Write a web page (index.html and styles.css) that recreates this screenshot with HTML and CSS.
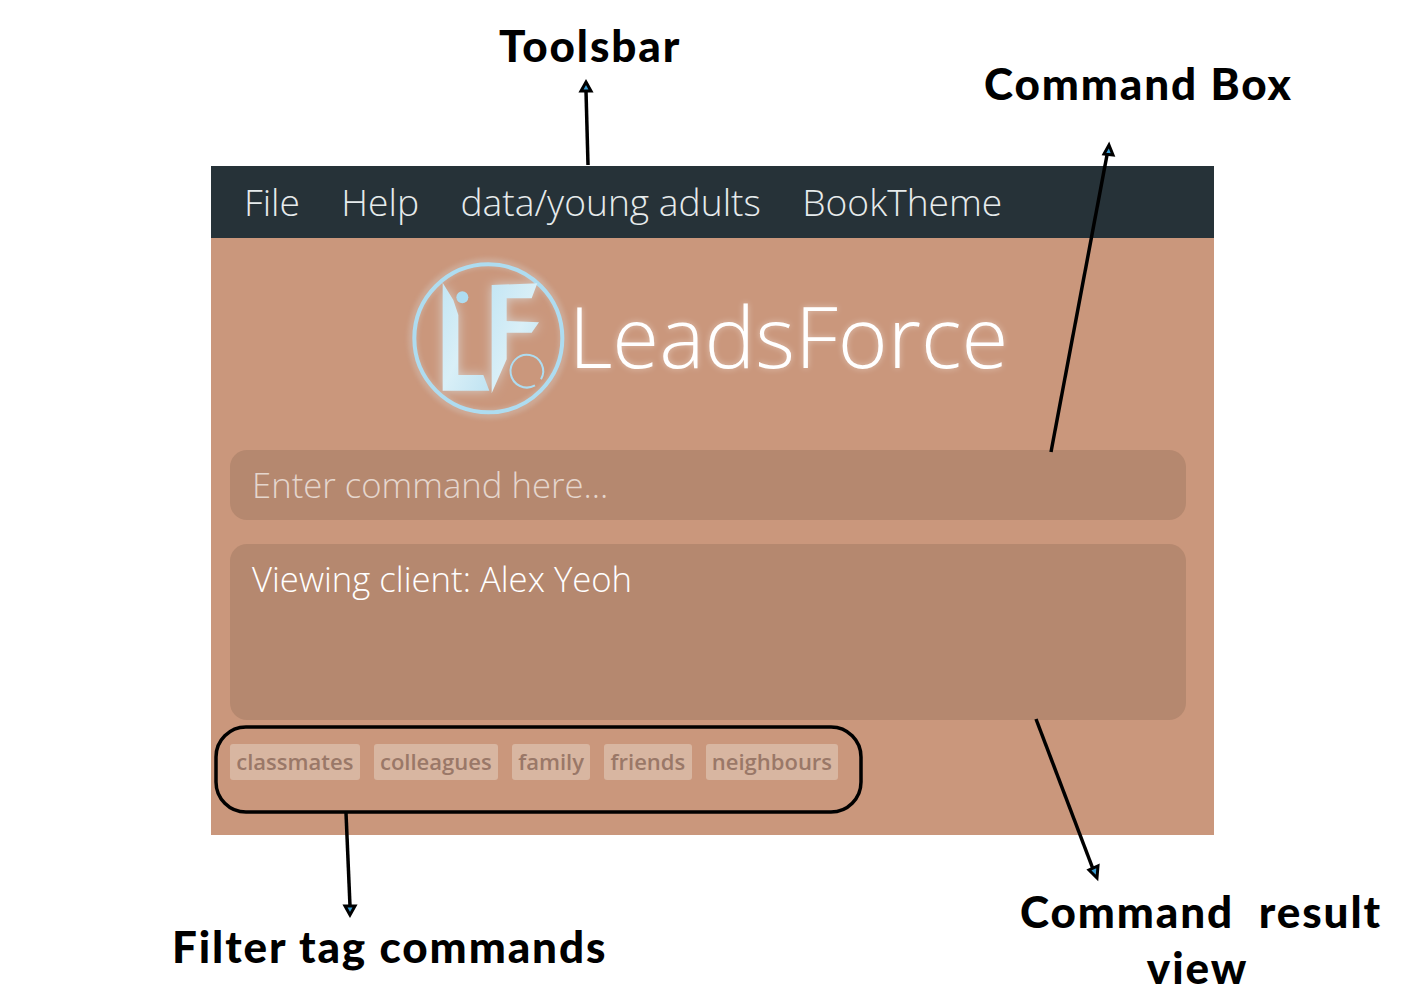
FILE: index.html
```html
<!DOCTYPE html>
<html lang="en">
<head>
    <meta charset="UTF-8">
    <meta name="viewport" content="width=device-width, initial-scale=1.0">
    <title>LeadsForce UI overview</title>
    <link rel="stylesheet" href="styles.css">
</head>
<body>

<div class="stage">
    <div class="app">
        <nav class="menuBar">
            <span class="menuItem">File</span>
            <span class="menuItem">Help</span>
            <span class="menuItem">data/young adults</span>
            <span class="menuItem">BookTheme</span>
        </nav>

        <div class="content">
            <div class="brand">
                <svg class="logo" viewBox="0 0 600 540" aria-hidden="true">
                    <defs>
                        <filter id="softGlow" x="-30%" y="-30%" width="160%" height="160%">
                            <feGaussianBlur stdDeviation="16"/>
                        </filter>
                        <linearGradient id="logoShade" x1="0" y1="0" x2="1" y2="1">
                            <stop offset="0" stop-color="#c4e6f4"/>
                            <stop offset="0.5" stop-color="#d9eff7"/>
                            <stop offset="1" stop-color="#bfe3f2"/>
                        </linearGradient>
                    </defs>
                    <circle class="logoHalo" cx="265" cy="265" r="226"/>
                    <g class="logoHalo2" filter="url(#softGlow)">
                        <polygon points="128,98 160,150 175,195 175,375 250,375 268,422 128,422"/>
                        <polygon points="275,105 412,100 395,145 320,145 320,213 417,217 395,248 320,248 320,328 275,430"/>
                    </g>
                    <circle class="logoRing" cx="265" cy="265" r="222"/>
                    <polygon class="logoFill" points="128,98 160,150 175,195 175,375 250,375 268,422 128,422"/>
                    <polygon class="logoFill" points="275,105 412,100 395,145 320,145 320,213 417,217 395,248 320,248 320,328 275,430"/>
                    <circle class="logoDot" cx="187" cy="142" r="18"/>
                    <path class="logoLoop" d="M405 406 A49 49 0 1 1 423 388"/>
                </svg>
                <span class="brandName">LeadsForce</span>
            </div>

            <div class="commandBox">Enter command here...</div>
            <div class="resultBox">Viewing client: Alex Yeoh</div>

            <div class="tagRow">
                <span class="tag">classmates</span>
                <span class="tag">colleagues</span>
                <span class="tag">family</span>
                <span class="tag">friends</span>
                <span class="tag">neighbours</span>
            </div>
        </div>
    </div>

    <!-- callouts drawn over the screenshot -->
    <svg class="arrows" viewBox="0 0 1425 1000" aria-hidden="true">
        <rect class="outline" x="216" y="727" width="645" height="85" rx="30"/>
        <line class="arrowLine" x1="588" y1="165" x2="586" y2="91"/>
        <polygon class="arrowHead" points="586,82 591,91 581,91"/>
        <line class="arrowLine" x1="1051" y1="452" x2="1107" y2="155"/>
        <polygon class="arrowHead" points="1109,145 1113,155 1104,154"/>
        <line class="arrowLine" x1="1036" y1="719" x2="1093" y2="869"/>
        <polygon class="arrowHead" points="1097,878 1089,870 1098,866"/>
        <line class="arrowLine" x1="346" y1="813" x2="350" y2="906"/>
        <polygon class="arrowHead" points="350,915 345,906 355,906"/>
    </svg>

    <div class="callout calloutTools">Toolsbar</div>
    <div class="callout calloutCommand">Command Box</div>
    <div class="callout calloutResult">Command&nbsp; result<br><span class="resultTail">view</span></div>
    <div class="callout calloutFilter">Filter tag commands</div>
</div>

</body>
</html>
```

FILE: styles.css
```css
html, body {
    margin: 0;
    background-color: white;
}
.stage {
    position: relative;
    height: 1000px;
    overflow: hidden;
    padding: 166px 0 0 211px;
    box-sizing: border-box;
    font-family: "Open Sans", "Noto Sans", sans-serif;
}
.app {
    width: 1003px;
    height: 669px;
    display: flex;
    flex-direction: column;
    background-color: #ca977c;
}
.menuBar {
    height: 70px;
    display: flex;
    align-items: center;
    gap: 41.4px;
    padding: 0 0 2px 33px;
    background-color: #263238;
    color: #e6ebec;
    font-size: 37.2px;
    font-weight: 300;
}
.content {
    flex: 1;
    display: flex;
    flex-direction: column;
    padding: 0 28px 0 19px;
}
.brand {
    height: 212px;
    display: flex;
    align-items: center;
    justify-content: center;
    margin-right: 6px;
}
.logo {
    width: 200px;
    height: 180px;
    margin: 0 -37px 0 0;
    position: relative;
    top: -4px;
    left: -4px;
    overflow: visible;
}
.logoHalo {
    fill: none;
    stroke: rgba(225, 245, 255, 0.2);
    stroke-width: 30;
    filter: blur(7px);
}
.logoHalo2 {
    fill: rgba(225, 245, 255, 0.6);
}
.logoRing {
    fill: none;
    stroke: #aedcf0;
    stroke-width: 12;
}
.logoFill {
    fill: url(#logoShade);
}
.logoDot {
    fill: #aedcf0;
}
.logoLoop {
    fill: none;
    stroke: #aedcf0;
    stroke-width: 6;
}
.brandName {
    color: white;
    font-size: 85.3px;
    font-weight: 300;
    line-height: 1;
    position: relative;
    top: -8px;
    left: 2px;
    text-shadow: 0 0 6px rgba(255, 255, 255, 0.45);
}
.commandBox, .resultBox {
    border-radius: 17px;
    background-color: #b5886f;
    box-sizing: border-box;
    font-weight: 300;
    font-size: 34.7px;
}
.commandBox {
    height: 70px;
    display: flex;
    align-items: center;
    padding: 0 0 1px 22px;
    color: #e5d6cd;
}
.resultBox {
    height: 176px;
    margin-top: 24px;
    padding: 12px 22px;
    color: white;
    line-height: 46px;
}
.tagRow {
    display: flex;
    gap: 14px;
    margin-top: 24px;
}
.tag {
    height: 34px;
    display: flex;
    align-items: center;
    padding: 0 6.3px 2px;
    border-radius: 3px;
    background-color: #d8b6a1;
    color: #9a7868;
    font-size: 22px;
    font-weight: 600;
}
.arrows {
    position: absolute;
    top: 0;
    left: 0;
    width: 1425px;
    height: 1000px;
}
.outline {
    fill: none;
    stroke: black;
    stroke-width: 3.5;
}
.arrowLine {
    stroke: black;
    stroke-width: 3.5;
}
.arrowHead {
    fill: #3a9bd0;
    stroke: black;
    stroke-width: 3;
}
.callout {
    position: absolute;
    color: black;
    font-family: Lato, "Open Sans", sans-serif;
    font-size: 44px;
    font-weight: 900;
    letter-spacing: 1.9px;
    line-height: 56px;
    white-space: nowrap;
}
.calloutTools {
    left: 499px;
    top: 17px;
}
.calloutCommand {
    left: 984px;
    top: 55px;
}
.calloutResult {
    left: 1020px;
    top: 883px;
    text-align: center;
}
.resultTail {
    display: inline-block;
    margin-right: 7px;
}
.calloutFilter {
    left: 172px;
    top: 918px;
}
```
